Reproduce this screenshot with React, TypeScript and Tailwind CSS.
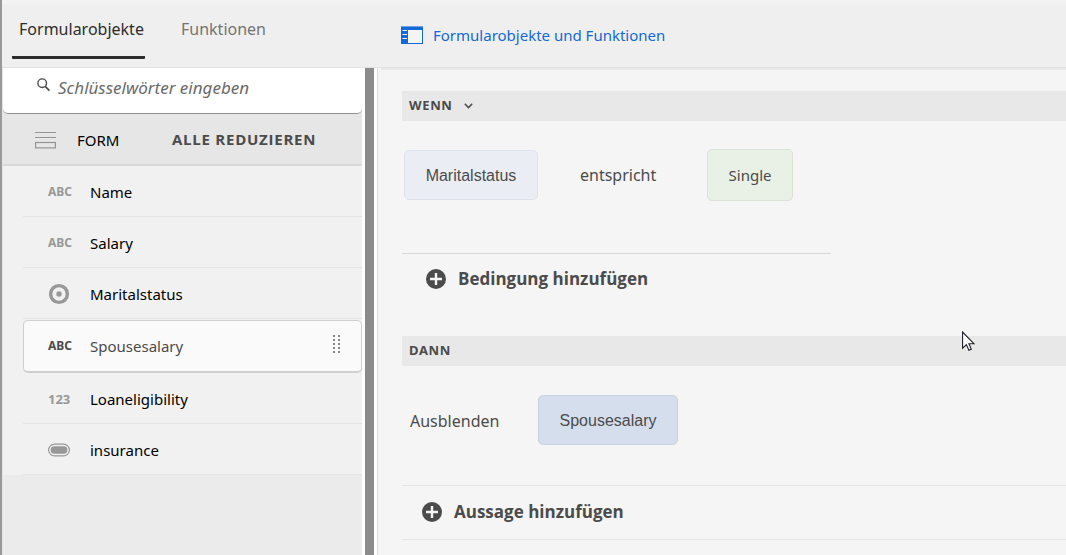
import { useState } from "react";
import type { ReactNode } from "react";

type Kind = "text" | "radio" | "number" | "switch";

const fields: { name: string; kind: Kind }[] = [
  { name: "Name", kind: "text" },
  { name: "Salary", kind: "text" },
  { name: "Maritalstatus", kind: "radio" },
  { name: "Spousesalary", kind: "text" },
  { name: "Loaneligibility", kind: "number" },
  { name: "insurance", kind: "switch" },
];

function KindIcon({ kind }: { kind: Kind }) {
  if (kind === "radio") {
    return (
      <svg width="22" height="22" viewBox="0 0 22 22" aria-hidden="true">
        <circle cx="11" cy="11" r="8.4" fill="none" stroke="currentColor" strokeWidth="3.4" />
        <circle cx="11" cy="11" r="2.7" fill="currentColor" />
      </svg>
    );
  }
  if (kind === "switch") {
    return (
      <svg width="22" height="14" viewBox="0 0 22 14" aria-hidden="true">
        <rect x="0.6" y="1.1" width="20.8" height="11.8" rx="5.9" fill="none" stroke="currentColor" strokeWidth="1.2" />
        <rect x="2.6" y="3.3" width="16.8" height="7.4" rx="3.7" fill="currentColor" />
      </svg>
    );
  }
  return (
    <span className={kind === "number" ? "text-[13px] leading-4 font-bold" : "text-xs leading-4 font-bold"}>
      {kind === "number" ? "123" : "ABC"}
    </span>
  );
}

function DragHandle() {
  return (
    <svg width="8" height="22" viewBox="0 0 8 22" fill="#6b6b6b" aria-hidden="true">
      {[0, 4, 8, 12, 16].map((y) => (
        <g key={y}>
          <rect x="0" y={y + 0.2} width="2" height="1.6" />
          <rect x="5" y={y + 0.2} width="2" height="1.6" />
        </g>
      ))}
    </svg>
  );
}

function FieldRow({ name, kind, selected, onSelect }: { name: string; kind: Kind; selected: boolean; onSelect: () => void }) {
  return (
    <li className={selected ? "pt-px" : ""}>
      <button
        type="button"
        onClick={onSelect}
        className={
          selected
            ? "flex h-[53px] w-full items-center rounded-[5px] border border-b-2 border-[#cfcfcf] bg-[#fafafa] pr-5 pl-6 text-[#4b4b4b]"
            : "flex h-[51px] w-full items-center border-b border-[#e4e4e4] pt-[2px] pr-5 pl-[25px] text-black"
        }
      >
        <span className={selected ? "flex w-[42px] text-[#4b4b4b]" : "flex w-[42px] text-[#989898]"}>
          <KindIcon kind={kind} />
        </span>
        <span className="flex-1 text-left text-[15px] leading-5">{name}</span>
        {selected && <DragHandle />}
      </button>
    </li>
  );
}

function AddButton({ children }: { children: ReactNode }) {
  return (
    <button type="button" className="flex items-center gap-3 font-['Open_Sans',sans-serif] text-[17px] leading-6 font-bold text-[#4b4b4b]">
      <svg width="20" height="20" viewBox="0 0 20 20" aria-hidden="true">
        <circle cx="10" cy="10" r="10" fill="currentColor" />
        <path d="M10 4v12M4 10h12" stroke="#f5f5f5" strokeWidth="2.4" />
      </svg>
      {children}
    </button>
  );
}

export default function App() {
  const [selected, setSelected] = useState("Spousesalary");

  return (
    <div className="relative flex min-h-screen flex-col border-l-2 border-[#999999] bg-[#f5f5f5] font-['Noto_Sans',sans-serif] text-[#4b4b4b]">
      <header className="flex h-[68px] border-y border-t-4 border-t-[#f2f2f2] border-b-[#e2e2e2] bg-[#efefef]">
        <nav className="flex w-[399px] shrink-0 gap-9 pl-[10px] text-[16px] leading-6" aria-label="Bereiche">
          <a href="#objekte" className="flex h-[55px] w-[133px] justify-center rounded-[1px] border-b-3 border-[#2c2c2c] pt-[13px] pl-[6px] text-[#2c2c2c]">
            Formularobjekte
          </a>
          <a href="#funktionen" className="flex h-[55px] pt-[13px] text-[#747474]">
            Funktionen
          </a>
        </nav>
        <button type="button" className="flex items-center gap-[10px] pb-[2px] text-[15px] leading-5 text-[#1469d6]">
          <svg width="22" height="18" viewBox="0 0 22 18" aria-hidden="true">
            <rect width="22" height="18" fill="#1469d6" />
            <rect width="22" height="1" fill="#6fa3e4" />
            <rect x="7" y="4" width="14" height="13" fill="#f4f4f4" />
            <path d="M1.5 4.5H6M1.5 8.5H6M1.5 12.5H6" stroke="#f4f4f4" strokeWidth="1.1" />
          </svg>
          Formularobjekte und Funktionen
        </button>
      </header>

      <div className="flex flex-1">
        <aside className="flex w-[363px] shrink-0 flex-col border-r-3 border-l border-l-[#e6e6e6] border-r-white bg-[#ebebeb]">
          <div className="bg-[#e6e6e6]">
            <label className="flex h-[46px] items-start gap-2 rounded-b-[5px] border-b border-[#909090] bg-white pt-2 pl-[34px]">
              <svg width="13" height="14" viewBox="0 0 13 14" className="mt-[2px] shrink-0" aria-hidden="true">
                <circle cx="5.2" cy="5.2" r="4.3" fill="none" stroke="#4b4b4b" strokeWidth="1.4" />
                <path d="M8.4 8.6l4 4" stroke="#4b4b4b" strokeWidth="1.7" />
              </svg>
              <input
                type="text"
                aria-label="Suche"
                placeholder="Schlüsselwörter eingeben"
                className="h-6 w-full bg-transparent text-[17px] leading-6 italic outline-none placeholder:text-[#6b6b6b]"
              />
            </label>
          </div>

          <div className="flex h-[52px] items-center border-b-2 border-[#d9d9d9] bg-[#e6e6e6] pt-[2px] pl-8 leading-5">
            <svg width="21" height="18" viewBox="0 0 21 18" fill="none" stroke="#959595" strokeWidth="1.2" aria-hidden="true">
              <path d="M0 1.5h21M0 6.5h21" />
              <rect x="0.6" y="11.5" width="19.8" height="5.4" />
            </svg>
            <span className="w-[95px] pl-[21px] text-[15px] text-black">FORM</span>
            <button type="button" className="pb-[2px] pl-[21px] font-['Open_Sans',sans-serif] text-[15px] font-bold tracking-wider">
              ALLE REDUZIEREN
            </button>
          </div>

          <ul className="bg-[#f1f1f1] pl-5">
            {fields.map((f) => (
              <FieldRow key={f.name} {...f} selected={f.name === selected} onSelect={() => setSelected(f.name)} />
            ))}
          </ul>
        </aside>

        <div className="w-3 shrink-0 border-r-3 border-white bg-[#8b8b8b]" />

        <main className="min-w-0 flex-1 border-l border-[#dddddd]">
          <div className="ml-[3px] h-[2px] bg-[#e8e8e8]" />
          <section className="ml-6">
            <div className="mt-[21px] flex h-[30px] bg-[#e8e8e8] pl-[7px]">
              <button type="button" className="flex items-center gap-[11px] text-[13px] font-bold tracking-wider">
                WENN
                <svg width="9" height="6" viewBox="0 0 9 6" fill="none" stroke="#4b4b4b" strokeWidth="1.5" aria-hidden="true">
                  <path d="M0.8 0.8L4.5 4.6L8.2 0.8" />
                </svg>
              </button>
            </div>
            <div className="flex items-center pt-7 pl-[2px] text-[16px]">
              <button type="button" className="h-[50px] w-[134px] rounded-[5px] border border-[#dde3ea] bg-[#eaeef4] pt-[2px] font-['Liberation_Sans',sans-serif] text-[16px]">
                Maritalstatus
              </button>
              <button type="button" className="ml-[42px] w-[127px] text-left">
                entspricht
              </button>
              <button type="button" className="h-[52px] w-[86px] rounded-[5px] border border-[#dae3d5] bg-[#e9f0e5] text-[15px]">
                Single
              </button>
            </div>
            <div className="mt-[52px] max-w-[429px] border-t border-[#d9d9d9] pt-[13px] pl-6">
              <AddButton>Bedingung hinzufügen</AddButton>
            </div>
          </section>

          <section className="mt-[45px] ml-6">
            <h2 className="flex h-[30px] items-center bg-[#e8e8e8] pl-[7px] text-[13px] font-bold tracking-wider">DANN</h2>
            <div className="flex items-center pt-[29px] pl-2 text-[16px]">
              <button type="button" className="w-32 pt-[2px] text-left">
                Ausblenden
              </button>
              <button type="button" className="h-[50px] w-[140px] rounded-[5px] border border-[#c8d3e3] bg-[#d5deec] pt-[2px] font-['Liberation_Sans',sans-serif] text-[16px]">
                Spousesalary
              </button>
            </div>
            <div className="mt-10 flex h-[55px] items-center border-y border-[#e6e6e6] pb-[2px] pl-5">
              <AddButton>Aussage hinzufügen</AddButton>
            </div>
          </section>
        </main>
      </div>

      <svg width="14" height="21" viewBox="0 0 14 21" className="pointer-events-none absolute top-[331px] left-[960px]" aria-hidden="true">
        <path d="M0.6 1v16.2l3.8-3.6 2.5 5.6 2.4-1-2.4-5.5h5z" fill="#fff" stroke="#1c1c28" strokeWidth="1.1" />
      </svg>
    </div>
  );
}
